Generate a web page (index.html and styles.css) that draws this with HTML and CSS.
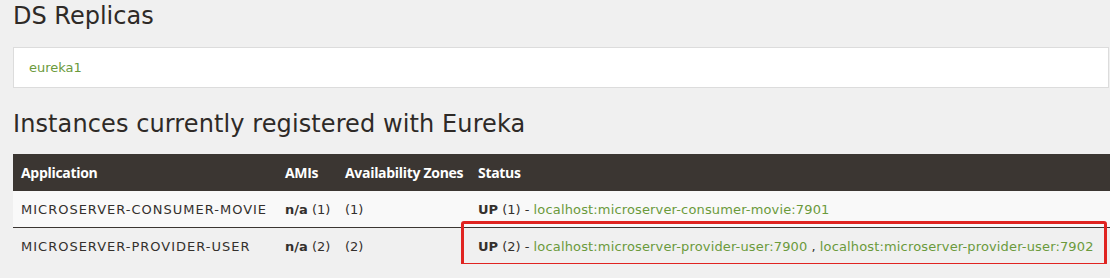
FILE: index.html
```html
<!DOCTYPE html>
<html lang="en">
<head>
  <meta charset="UTF-8">
  <title>Eureka</title>
  <link rel="stylesheet" href="styles.css">
</head>
<body>
  <div class="container">
    <h1>DS Replicas</h1>
    <ul class="replicas">
      <li><a href="#">eureka1</a></li>
    </ul>

    <h1 class="instances-title">Instances currently registered with Eureka</h1>
    <div class="table-wrap">
      <table class="instances">
        <thead>
          <tr>
            <th class="col-app">Application</th>
            <th class="col-ami">AMIs</th>
            <th class="col-zone">Availability Zones</th>
            <th>Status</th>
          </tr>
        </thead>
        <tbody>
          <tr class="odd">
            <td class="app">MICROSERVER-CONSUMER-MOVIE</td>
            <td><b>n/a</b> (1)</td>
            <td>(1)</td>
            <td class="status"><b>UP</b> (1) - <a href="#">localhost:microserver-consumer-movie:7901</a></td>
          </tr>
          <tr class="even">
            <td class="app">MICROSERVER-PROVIDER-USER</td>
            <td><b>n/a</b> (2)</td>
            <td>(2)</td>
            <td class="status"><b>UP</b> (2) - <a href="#">localhost:microserver-provider-user:7900</a> , <a href="#">localhost:microserver-provider-user:7902</a></td>
          </tr>
        </tbody>
      </table>
      <div class="highlight"></div>
    </div>
  </div>
</body>
</html>
```

FILE: styles.css
```css
body {
  margin: 0;
  background-color: #f0f0f0;
  font-family: "DejaVu Sans", sans-serif;
  color: #34302d;
  overflow: hidden;
}

.container {
  padding: 0 0 0 13px;
}

h1 {
  font-family: "DejaVu Sans", sans-serif;
  font-weight: normal;
  font-size: 24px;
  line-height: 28px;
  margin: 0;
  padding-top: 2px;
  color: #2e2a27;
}

.replicas {
  list-style: none;
  margin: 17px 0 0 0;
  padding: 0 15px;
  height: 39px;
  line-height: 39px;
  background-color: #ffffff;
  border: 1px solid #dcdcdc;
  width: 1064px;
  font-size: 13px;
}

a {
  color: #6b9a3c;
  text-decoration: none;
}

.instances-title {
  margin-top: 20px;
  letter-spacing: 0.1px;
}

.table-wrap {
  position: relative;
  margin-top: 16px;
}

.instances {
  border-collapse: collapse;
  table-layout: fixed;
  width: 1097px;
  font-size: 13px;
  white-space: nowrap;
}

.instances th {
  background-color: #3b3632;
  color: #ffffff;
  text-align: left;
  font-family: "Open Sans", sans-serif;
  font-weight: bold;
  height: 37px;
  padding: 0 8px;
  font-size: 14px;
  letter-spacing: -0.3px;
}

.instances td {
  height: 36px;
  padding: 0 8px;
  color: #34302d;
}

.instances td b {
  font-weight: 600;
}

.col-app {
  width: 248px;
}

.col-ami {
  width: 44px;
}

.col-zone {
  width: 117px;
}

.instances .app {
  letter-spacing: 1px;
}

.instances .status a {
  letter-spacing: 0.15px;
}

.instances tr.odd td {
  background-color: #f9f9f9;
  border-bottom: 1px solid #3b3632;
}

.instances tr.even td {
  background-color: #f0f0f0;
}

.highlight {
  position: absolute;
  left: 448px;
  top: 67px;
  width: 640px;
  height: 39px;
  border: 3px solid #e02421;
  border-radius: 3px;
}
```
